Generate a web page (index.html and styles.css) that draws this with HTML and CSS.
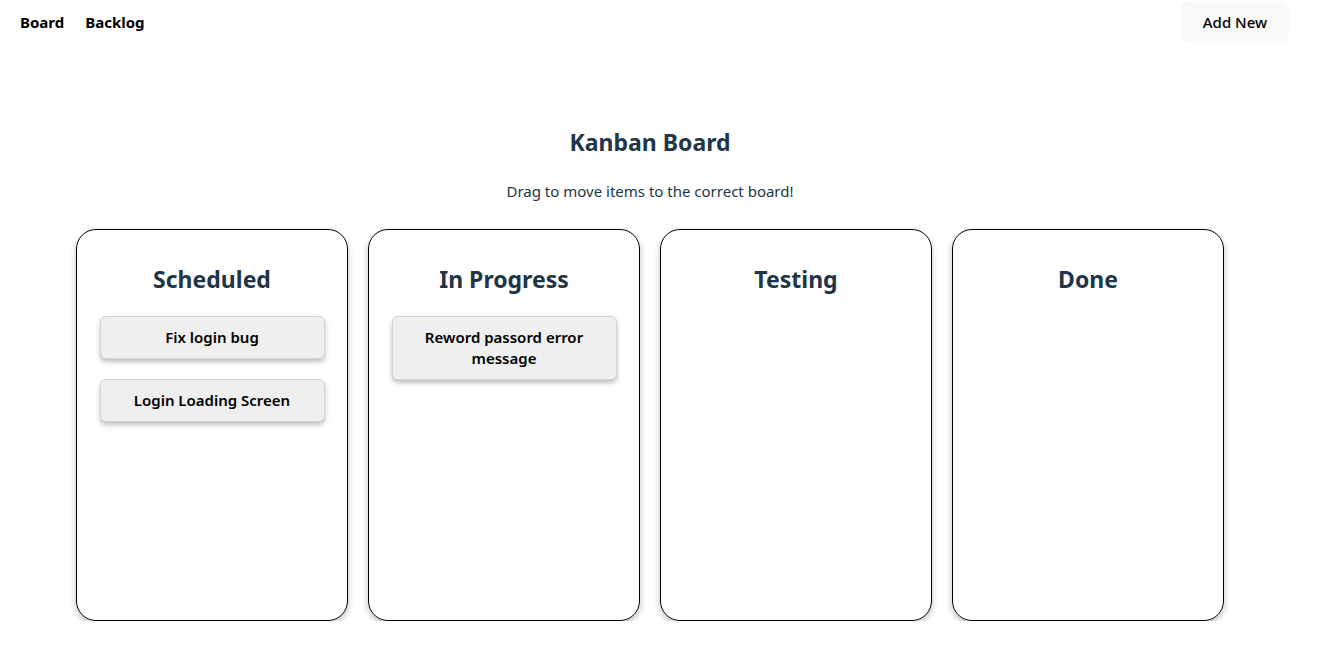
FILE: index.html
```html
<!DOCTYPE html>
<html lang="en">
<head>
<meta charset="utf-8">
<title>Kanban Board</title>
<link rel="stylesheet" href="styles.css">
</head>
<body>
<div class="app">
  <header class="topbar">
    <nav class="nav">
      <a class="nav-link" href="#">Board</a>
      <a class="nav-link" href="#">Backlog</a>
    </nav>
    <button class="add-btn">Add New</button>
  </header>
  <main class="main">
    <h1 class="title">Kanban Board</h1>
    <p class="subtitle">Drag to move items to the correct board!</p>
    <section class="board">
      <div class="column">
        <h2 class="col-title">Scheduled</h2>
        <div class="card">Fix login bug</div>
        <div class="card">Login Loading Screen</div>
      </div>
      <div class="column">
        <h2 class="col-title">In Progress</h2>
        <div class="card">Reword passord error message</div>
      </div>
      <div class="column">
        <h2 class="col-title">Testing</h2>
      </div>
      <div class="column">
        <h2 class="col-title">Done</h2>
      </div>
    </section>
  </main>
</div>
</body>
</html>
```

FILE: styles.css
```css
* { box-sizing: border-box; }
html, body { margin: 0; padding: 0; background: #ffffff; }
body {
  font-family: "Noto Sans", "Open Sans", sans-serif;
  font-size: 15px;
  line-height: 1.4;
  color: #000;
}
.app { width: 1300px; }
.topbar {
  display: flex;
  justify-content: space-between;
  align-items: flex-start;
  padding: 0 11px 0 20px;
  height: 60px;
}
.nav { display: flex; gap: 21px; padding-top: 12px; }
.nav-link {
  color: #000;
  text-decoration: none;
  font-weight: 700;
  font-size: 15px;
}
.add-btn {
  margin-top: 1px;
  width: 108px;
  height: 42px;
  border: none;
  border-radius: 8px;
  background: #f9f9f9;
  font-family: inherit;
  font-size: 15px;
  font-weight: 500;
  color: #000;
  padding: 0;
}
.main { display: flex; flex-direction: column; align-items: center; }
.title {
  margin: 66px 0 0;
  font-size: 23px;
  line-height: 32px;
  color: #213547;
  font-weight: 700;
}
.subtitle {
  margin: 23px 0 0;
  font-size: 15px;
  line-height: 20px;
  color: #213547;
}
.board {
  display: flex;
  gap: 20px;
  margin-top: 28px;
}
.column {
  width: 272px;
  height: 392px;
  border: 1px solid #000;
  border-radius: 20px;
  box-shadow: 0 3px 6px rgba(0,0,0,0.25);
  display: flex;
  flex-direction: column;
  align-items: center;
  padding: 0 23px;
}
.col-title {
  margin: 33px 0 21px;
  font-size: 23px;
  line-height: 32px;
  color: #213547;
  font-weight: 700;
}
.card {
  width: 225px;
  min-height: 43px;
  background: #efefef;
  border: 1px solid #d4d4d4;
  border-radius: 6px;
  box-shadow: 0 3px 5px rgba(0,0,0,0.25);
  display: flex;
  align-items: center;
  justify-content: center;
  text-align: center;
  font-size: 15px;
  font-weight: 600;
  line-height: 21px;
  padding: 10px 30px;
  margin-bottom: 20px;
}
```
